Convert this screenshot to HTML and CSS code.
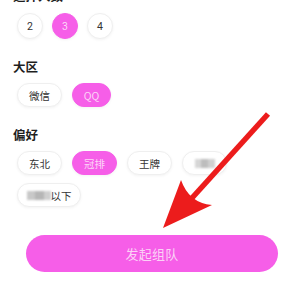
FILE: index.html
```html
<!DOCTYPE html>
<html lang="zh">
<head>
<meta charset="utf-8">
<title>发起组队</title>
<link rel="stylesheet" href="styles.css">
</head>
<body>
<div class="page">
  <div class="label label-cut">选择人数</div>
  <div class="row">
    <span class="circle">2</span>
    <span class="circle on">3</span>
    <span class="circle">4</span>
  </div>

  <div class="label">大区</div>
  <div class="row gap10">
    <span class="pill w45">微信</span>
    <span class="pill on w39">QQ</span>
  </div>

  <div class="label">偏好</div>
  <div class="row wrap">
    <span class="pill w45">东北</span>
    <span class="pill on w45">冠排</span>
    <span class="pill w45">王牌</span>
    <span class="pill w45"><span class="mosaic m1"></span></span>
    <span class="pill w64"><span class="mosaic m2"></span>以下</span>
  </div>

  <button class="cta">发起组队</button>
</div>

<svg class="arrow" width="300" height="282" viewBox="0 0 300 282" aria-hidden="true">
  <line x1="268" y1="114" x2="192" y2="198" stroke="#ec1c1c" stroke-width="5.5"/>
  <path d="M163,228 L181,180 Q189,203 212,205 Z" fill="#ec1c1c"/>
</svg>
</body>
</html>
```

FILE: styles.css
```css
html, body {
  margin: 0;
  padding: 0;
  background: #ffffff;
}

body {
  width: 300px;
  height: 282px;
  overflow: hidden;
  position: relative;
  font-family: "Noto Sans CJK SC", "Noto Sans", sans-serif;
  color: #222;
}

.page {
  display: flex;
  flex-direction: column;
  align-items: flex-start;
  padding-left: 13px;
}

.label {
  font-size: 12.5px;
  font-weight: 700;
  line-height: 16px;
  color: #1e1e1e;
  margin-top: 20px;
}

.label-cut {
  margin-top: -12px;
}

.row {
  display: flex;
  gap: 9px;
  margin-top: 8px;
  padding-left: 4px;
}

.row.gap10 {
  gap: 10px;
}

.label-cut + .row {
  margin-top: 9px;
}

.row.wrap {
  flex-wrap: wrap;
  width: 240px;
  gap: 8px 10px;
}

.circle {
  width: 26px;
  height: 26px;
  box-sizing: border-box;
  border-radius: 50%;
  border: 1px solid #efefef;
  box-shadow: 0 1px 3px rgba(0, 0, 0, 0.05);
  background: #fff;
  display: flex;
  align-items: center;
  justify-content: center;
  font-family: "Roboto", "Noto Sans", sans-serif;
  font-size: 10.5px;
  color: #333;
}

.circle.on,
.pill.on {
  background: #f65ee8;
  border-color: #f65ee8;
  color: #fcd6f7;
}

.pill {
  height: 24px;
  box-sizing: border-box;
  padding: 0;
  border-radius: 12px;
  border: 1px solid #efefef;
  box-shadow: 0 1px 3px rgba(0, 0, 0, 0.05);
  background: #fff;
  display: flex;
  align-items: center;
  justify-content: center;
  white-space: nowrap;
  font-size: 10.5px;
  color: #333;
}

.w39 { width: 39px; }
.w45 { width: 45px; }
.w64 { width: 64px; }

.mosaic {
  display: inline-block;
  height: 9px;
  filter: blur(1px);
}

.m1 {
  width: 20px;
  background: linear-gradient(90deg, #d6d6d6 0 30%, #bdbdbd 30% 65%, #d0d0d0 65%);
}

.m2 {
  width: 24px;
  background: linear-gradient(90deg, #c8c8c8 0 35%, #b6b6b6 35% 70%, #cfcfcf 70%);
}

.cta {
  margin-top: 28px;
  margin-left: 13px;
  width: 252px;
  height: 37px;
  border: none;
  border-radius: 19px;
  background: #f65ee8;
  color: #fbd2f6;
  font-family: "Noto Sans CJK SC", sans-serif;
  font-size: 13px;
  letter-spacing: 0.3px;
}

.arrow {
  position: absolute;
  left: 0;
  top: 0;
  pointer-events: none;
}
```
